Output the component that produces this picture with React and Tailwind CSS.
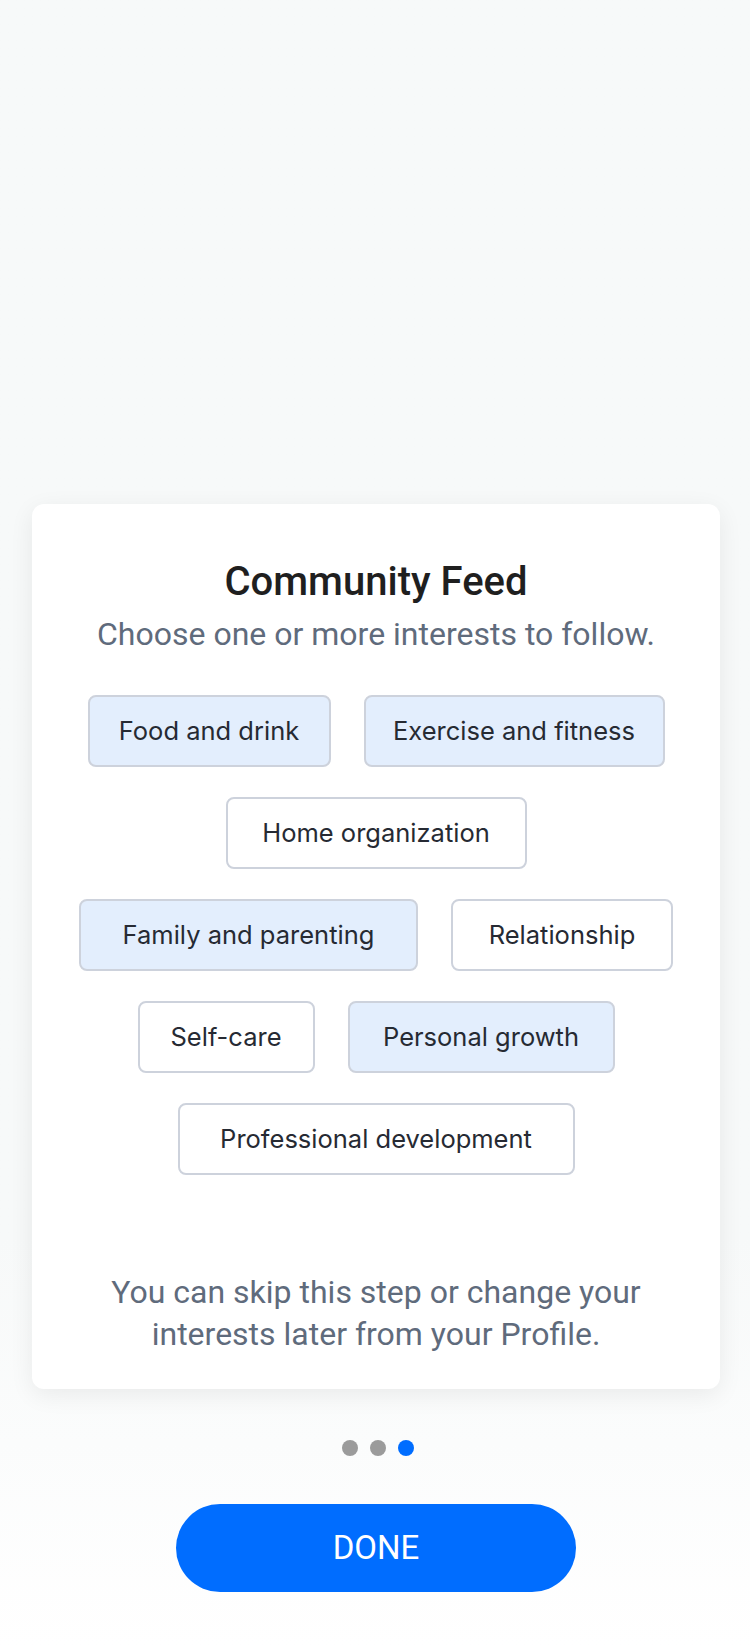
import { useState } from "react";

// widths taken from the design, the chips are not sized by their label
const interests = [
  { name: "Food and drink", width: "w-[243px]" },
  { name: "Exercise and fitness", width: "w-[301px]" },
  { name: "Home organization", width: "w-[301px]" },
  { name: "Family and parenting", width: "w-[339px]" },
  { name: "Relationship", width: "w-[222px]" },
  { name: "Self-care", width: "w-[177px]" },
  { name: "Personal growth", width: "w-[267px]" },
  { name: "Professional development", width: "w-[397px]" },
];

const App = () => {
  const [selected, setSelected] = useState([
    "Food and drink",
    "Exercise and fitness",
    "Family and parenting",
    "Personal growth",
  ]);

  const toggle = (name) => {
    setSelected((prev) =>
      prev.includes(name) ? prev.filter((n) => n !== name) : [...prev, name]
    );
  };

  return (
    <div className="min-h-[1648px] flex flex-col bg-linear-to-b from-[#f7f9f9] from-75% to-white font-['Roboto',sans-serif]">
      {/* illustration area, empty on this step */}
      <div className="h-[504px]" />

      <div className="ml-8 mr-[30px] rounded-xl bg-white pt-[54px] pb-[34px] shadow-[0_6px_24px_rgba(0,0,0,0.07)] flex flex-col items-center">
        <h1 className="text-[40px] leading-[48px] font-medium text-[#1f1f1f]">
          Community Feed
        </h1>
        <p className="mt-2 text-[32px] leading-[40px] text-[#5f6b7c]">
          Choose one or more interests to follow.
        </p>

        <div className="mt-[41px] w-[620px] flex flex-wrap justify-center gap-x-[33px] gap-y-[30px]">
          {interests.map(({ name, width }) => (
            <button
              key={name}
              type="button"
              onClick={() => toggle(name)}
              className={`${width} h-[72px] rounded-lg border-2 border-[#cdd2dc] text-[25.5px] text-[#262a33] font-['Inter',sans-serif] ${
                selected.includes(name) ? "bg-[#e3eefd]" : "bg-white"
              }`}
            >
              {name}
            </button>
          ))}
        </div>

        <p className="mt-[96px] text-[32px] leading-[42px] text-[#5f6b7c] text-center">
          You can skip this step or change your
          <br />
          interests later from your Profile.
        </p>
      </div>

      <div className="ml-8 mr-[30px]">
        <div className="mt-[51px] pl-1 flex justify-center gap-3">
          <span className="w-4 h-4 rounded-full bg-[#9b9b9b]" />
          <span className="w-4 h-4 rounded-full bg-[#9b9b9b]" />
          <span className="w-4 h-4 rounded-full bg-[#006dff]" />
        </div>

        <div className="mt-12 flex justify-center">
          <button
            type="button"
            className="w-[400px] h-[88px] rounded-full bg-[#006dff] text-white text-[33px]"
          >
            DONE
          </button>
        </div>
      </div>
    </div>
  );
};

export default App;
